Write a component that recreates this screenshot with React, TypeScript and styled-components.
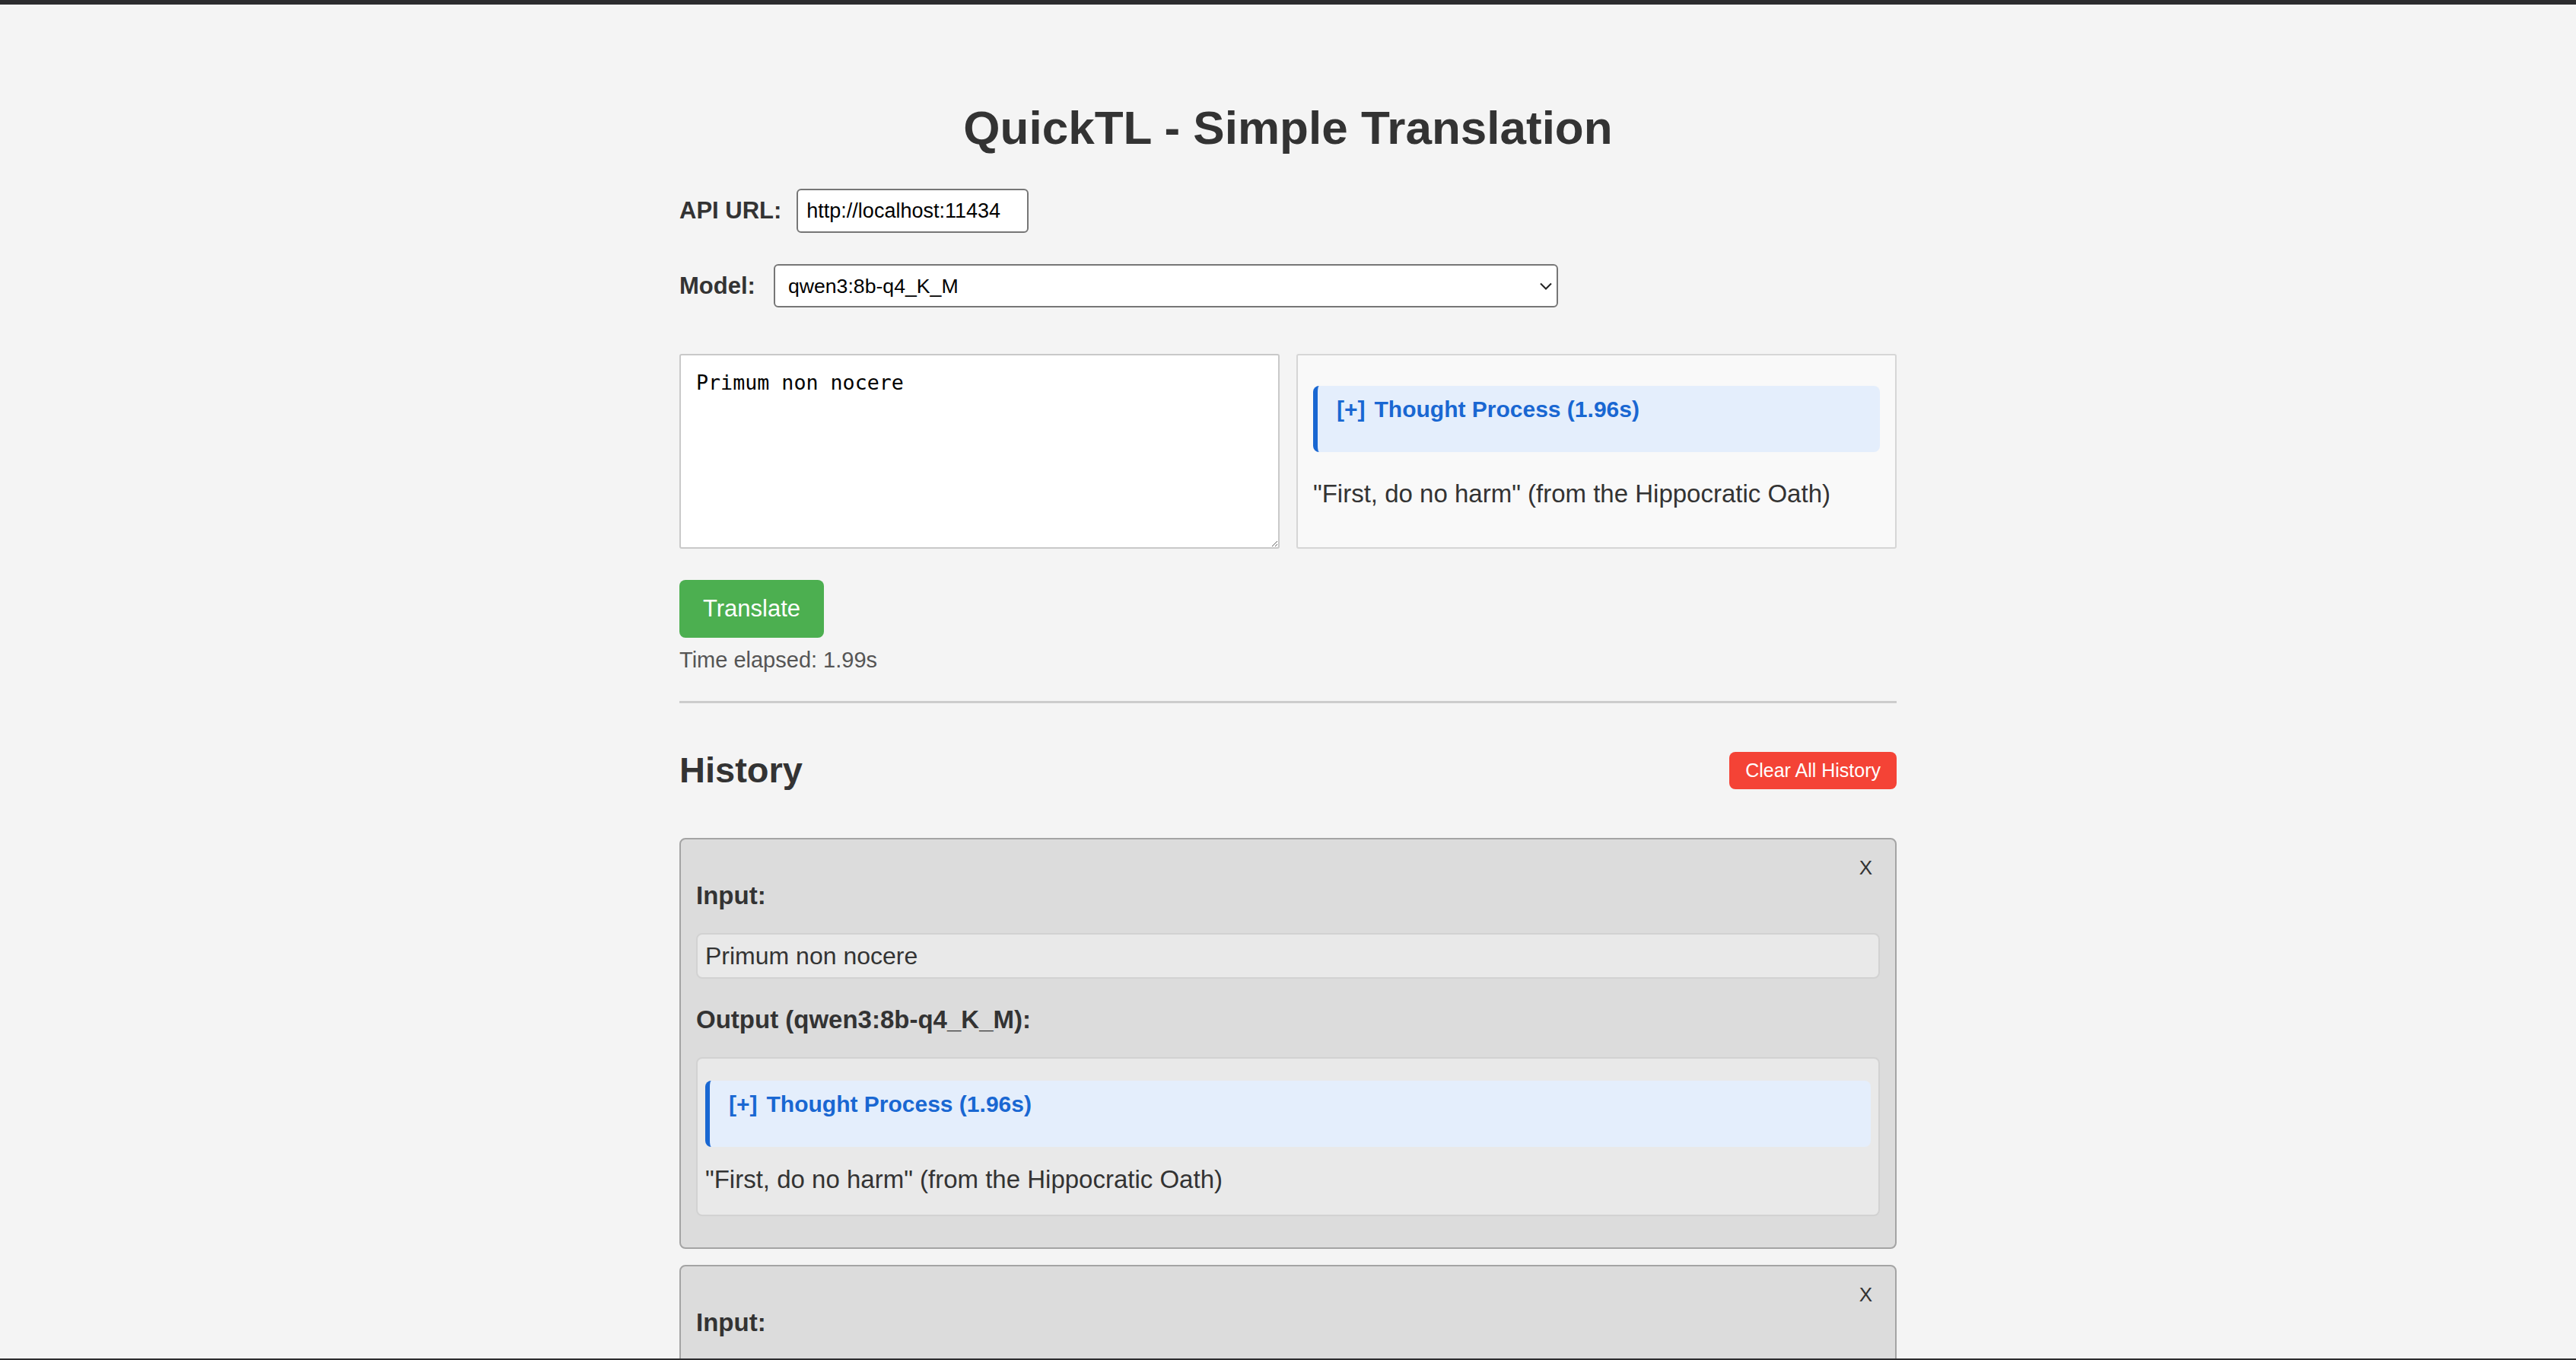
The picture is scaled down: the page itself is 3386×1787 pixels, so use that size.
import React from "react";
import styled, { createGlobalStyle } from "styled-components";

const GlobalStyle = createGlobalStyle`
  html, body { margin: 0; padding: 0; background: #f4f4f4; }
  body { font-family: "Liberation Sans", Arial, Helvetica, sans-serif; color: #333; }
  *, *::before, *::after { box-sizing: border-box; }
`;

const TopBar = styled.div`
  height: 6px;
  background: #2c2c2e;
`;

const BottomBar = styled.div`
  position: fixed;
  left: 0;
  right: 0;
  bottom: 0;
  height: 2px;
  background: #2c2c2e;
`;

const Container = styled.main`
  width: 1600px;
  margin: 0 auto;
  padding-bottom: 200px;
  display: flex;
  flex-direction: column;
`;

const Title = styled.h1`
  margin: 126px 0 0;
  font-size: 62px;
  line-height: 72px;
  font-weight: 700;
  text-align: center;
  color: #333;
`;

const FieldRow = styled.div<{ $top: number; $gap: number }>`
  display: flex;
  align-items: center;
  gap: ${(p) => p.$gap}px;
  margin-top: ${(p) => p.$top}px;
`;

const FieldLabel = styled.label`
  font-size: 31px;
  font-weight: 700;
  color: #333;
  line-height: 36px;
`;

const UrlInput = styled.input`
  width: 305px;
  height: 58px;
  border: 2px solid #767676;
  border-radius: 6px;
  padding: 0 11px;
  font-family: "Liberation Sans", Arial, sans-serif;
  font-size: 27px;
  color: #000;
  background: #fff;
`;

const SelectWrap = styled.div`
  position: relative;
  width: 1031px;
  height: 57px;
`;

const ModelSelect = styled.select`
  appearance: none;
  width: 100%;
  height: 100%;
  border: 2px solid #767676;
  border-radius: 6px;
  padding: 0 40px 0 17px;
  font-family: "Liberation Sans", Arial, sans-serif;
  font-size: 26.67px;
  color: #000;
  background: #fff;
`;

const Chevron = styled.svg`
  position: absolute;
  right: 8px;
  top: 50%;
  transform: translateY(-50%);
  pointer-events: none;
`;

const Workspace = styled.section`
  display: grid;
  grid-template-columns: 1fr 1fr;
  gap: 22px;
  margin-top: 61px;
`;

const SourceText = styled.textarea`
  height: 256px;
  border: 2px solid #c9c9c9;
  border-radius: 3px;
  padding: 20px;
  font-family: "DejaVu Sans Mono", "Liberation Mono", monospace;
  font-size: 26.67px;
  color: #000;
  background: #fff;
  resize: vertical;
`;

const OutputPanel = styled.div`
  border: 2px solid #d6d6d6;
  border-radius: 3px;
  background: #f9f9f9;
  padding: 20px;
`;

const Thought = styled.details<{ $top: number }>`
  margin: ${(p) => p.$top}px 0 0;
  background: #e4eefc;
  border-left: 6px solid #1967d2;
  border-radius: 8px;
  padding: 14px 20px 39px 25px;
`;

const ThoughtSummary = styled.summary`
  list-style: none;
  font-size: 30px;
  font-weight: 700;
  line-height: 34px;
  color: #1967d2;
  cursor: pointer;
  &::-webkit-details-marker { display: none; }
`;

const ToggleMark = styled.span`
  margin-right: 12px;
`;

const Translation = styled.p<{ $top: number; $bottom: number }>`
  margin: ${(p) => p.$top}px 0 ${(p) => p.$bottom}px;
  font-size: 33px;
  line-height: 48px;
  color: #333;
`;

const TranslateButton = styled.button`
  align-self: flex-start;
  margin-top: 41px;
  background: #4caf50;
  color: #fff;
  border: none;
  border-radius: 8px;
  font-family: "Liberation Sans", Arial, sans-serif;
  font-size: 31px;
  line-height: 36px;
  padding: 20px 31px;
  cursor: pointer;
`;

const Elapsed = styled.div`
  margin-top: 12px;
  font-size: 29px;
  line-height: 34px;
  color: #555;
`;

const Divider = styled.hr`
  margin: 37px 0 0;
  border: 0;
  height: 3px;
  background: #cccccc;
`;

const HistoryHeader = styled.div`
  display: flex;
  justify-content: space-between;
  align-items: center;
  height: 56px;
  margin-top: 60px;
`;

const HistoryTitle = styled.h2`
  margin: 0;
  font-size: 47px;
  line-height: 56px;
  font-weight: 700;
  color: #333;
`;

const ClearButton = styled.button`
  background: #f44336;
  color: #fff;
  border: none;
  border-radius: 8px;
  font-family: "Liberation Sans", Arial, sans-serif;
  font-size: 25px;
  line-height: 29px;
  padding: 10px 21px;
  cursor: pointer;
`;

const HistoryList = styled.div`
  display: flex;
  flex-direction: column;
  gap: 21px;
  margin-top: 61px;
`;

const HistoryCard = styled.article`
  position: relative;
  background: #dcdcdc;
  border: 2px solid #a4a4a4;
  border-radius: 8px;
  padding: 20px;
`;

const RemoveButton = styled.button`
  position: absolute;
  top: 24px;
  right: 30px;
  background: none;
  border: none;
  padding: 0;
  font-family: "Liberation Sans", Arial, sans-serif;
  font-size: 26px;
  line-height: 26px;
  color: #333;
  cursor: pointer;
`;

const EntryLabel = styled.div`
  margin: 30px 0 25px;
  font-size: 33px;
  font-weight: 700;
  line-height: 48px;
  color: #333;
`;

const EntryBox = styled.div<{ $mb?: number }>`
  background: #e9e9e9;
  border: 2px solid #d2d2d2;
  border-radius: 8px;
  padding: 10px;
  font-size: 32px;
  line-height: 36px;
  color: #333;
  margin-bottom: ${(p) => p.$mb ?? 0}px;
`;

type Entry = { input: string; model: string; seconds: string; output: string };

const history: Entry[] = [
  {
    input: "Primum non nocere",
    model: "qwen3:8b-q4_K_M",
    seconds: "1.96s",
    output: "\"First, do no harm\" (from the Hippocratic Oath)",
  },
  {
    input: "Primum non nocere",
    model: "qwen3:8b-q4_K_M",
    seconds: "1.96s",
    output: "\"First, do no harm\" (from the Hippocratic Oath)",
  },
];

function ThoughtBlock({ seconds, top }: { seconds: string; top: number }) {
  return (
    <Thought $top={top}>
      <ThoughtSummary>
        <ToggleMark>[+]</ToggleMark>Thought Process ({seconds})
      </ThoughtSummary>
    </Thought>
  );
}

export default function App() {
  return (
    <>
      <GlobalStyle />
      <TopBar />
      <Container>
        <Title>QuickTL - Simple Translation</Title>
        <FieldRow $top={44} $gap={20}>
          <FieldLabel>API URL:</FieldLabel>
          <UrlInput defaultValue="http://localhost:11434" />
        </FieldRow>
        <FieldRow $top={41} $gap={24}>
          <FieldLabel>Model:</FieldLabel>
          <SelectWrap>
            <ModelSelect defaultValue="qwen3:8b-q4_K_M">
              <option value="qwen3:8b-q4_K_M">qwen3:8b-q4_K_M</option>
            </ModelSelect>
            <Chevron width="16" height="10" viewBox="0 0 16 10">
              <path d="M1 1.5 L8 8.5 L15 1.5" fill="none" stroke="#222" strokeWidth="2" />
            </Chevron>
          </SelectWrap>
        </FieldRow>
        <Workspace>
          <SourceText defaultValue="Primum non nocere" />
          <OutputPanel>
            <ThoughtBlock seconds="1.96s" top={20} />
            <Translation $top={31} $bottom={0}>
              "First, do no harm" (from the Hippocratic Oath)
            </Translation>
          </OutputPanel>
        </Workspace>
        <TranslateButton>Translate</TranslateButton>
        <Elapsed>Time elapsed: 1.99s</Elapsed>
        <Divider />
        <HistoryHeader>
          <HistoryTitle>History</HistoryTitle>
          <ClearButton>Clear All History</ClearButton>
        </HistoryHeader>
        <HistoryList>
          {history.map((h, i) => (
            <HistoryCard key={i}>
              <RemoveButton>X</RemoveButton>
              <EntryLabel>Input:</EntryLabel>
              <EntryBox>{h.input}</EntryBox>
              <EntryLabel>Output ({h.model}):</EntryLabel>
              <EntryBox $mb={21}>
                <ThoughtBlock seconds={h.seconds} top={19} />
                <Translation $top={19} $bottom={12}>
                  {h.output}
                </Translation>
              </EntryBox>
            </HistoryCard>
          ))}
        </HistoryList>
      </Container>
      <BottomBar />
    </>
  );
}
